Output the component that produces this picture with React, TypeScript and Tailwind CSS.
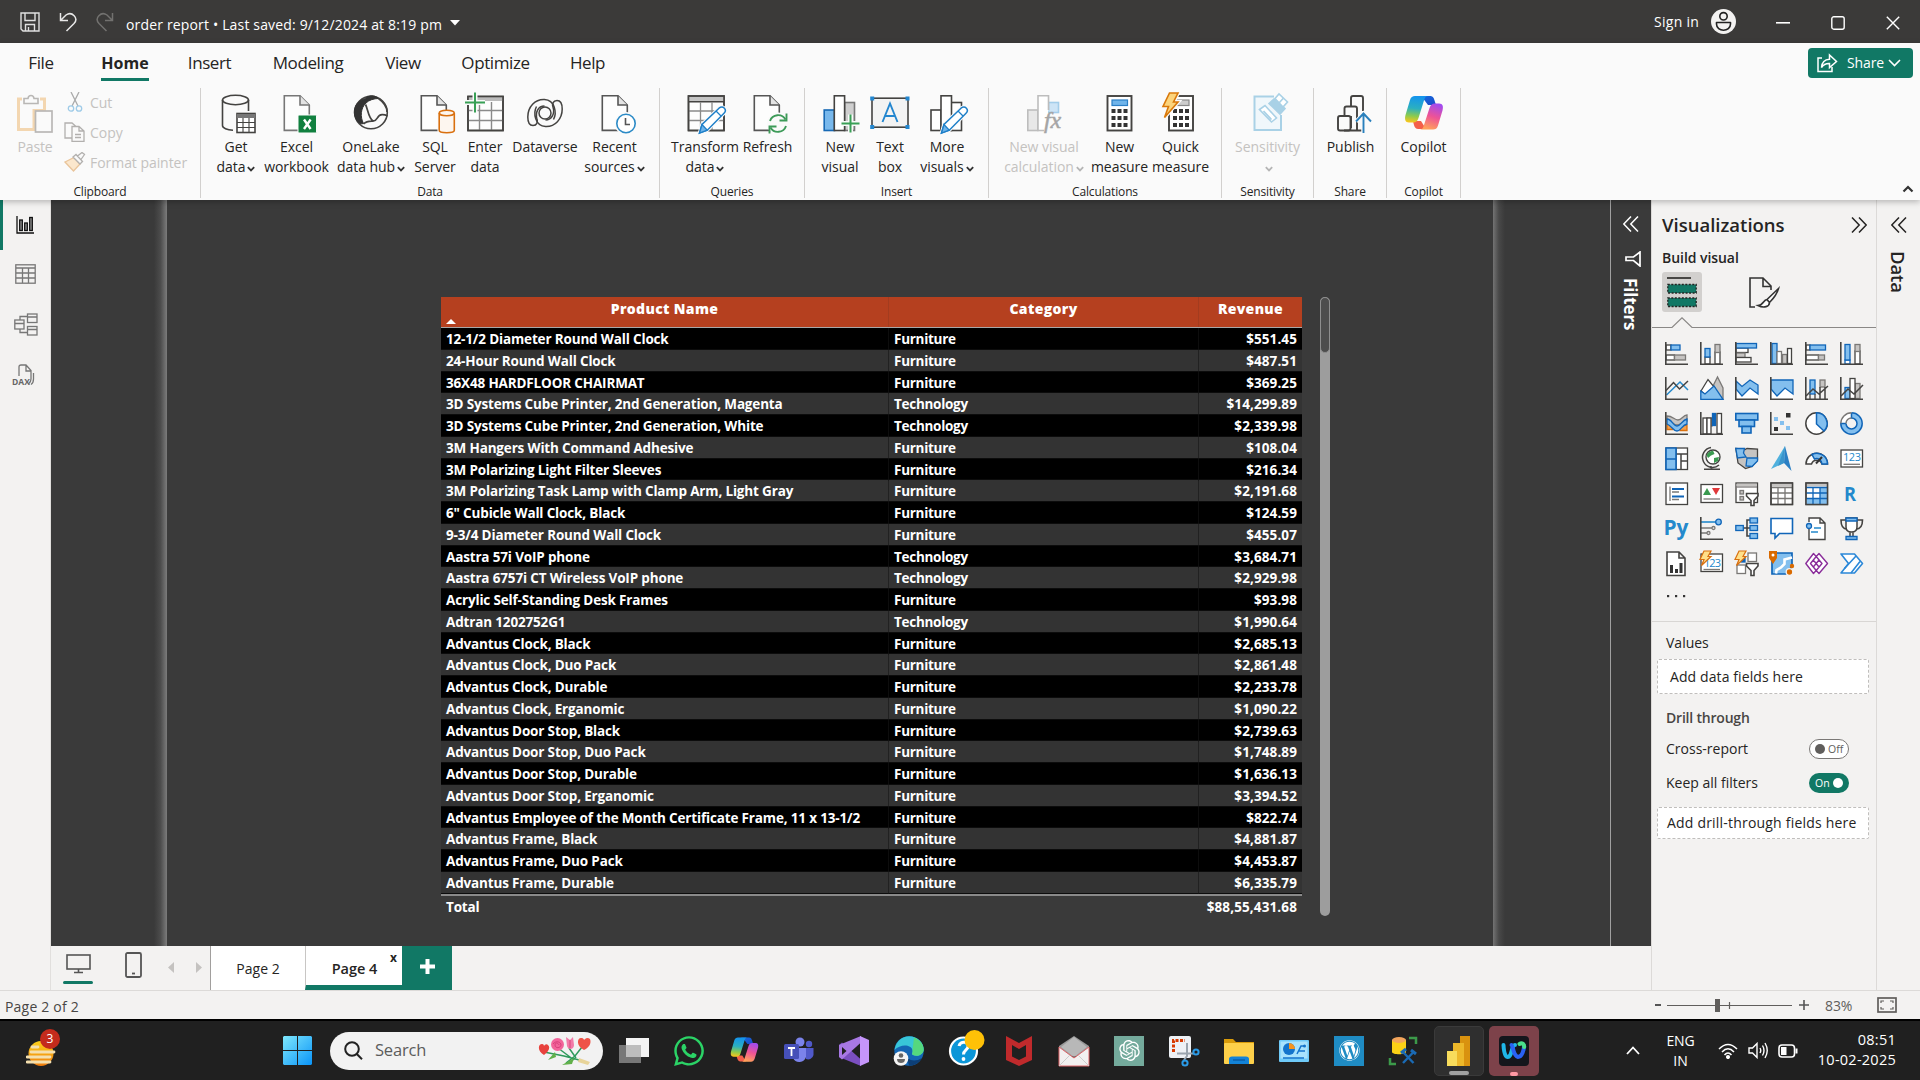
import React from "react";
import { FaWordpress, FaWhatsapp } from "react-icons/fa";
import { RiOpenaiFill } from "react-icons/ri";

type Kids = { children?: React.ReactNode };

const INK = "#444341";
const BLUE = "#1065b8";
const LBLUE = "#83bfee";
const GREY = "#7a7876";
const LGREY = "#c6c4c2";

/* ---------- shared glyph pieces ---------- */

const Chev = ({ c = "#333" }: { c?: string }) => (
  <svg width="8" height="6" viewBox="0 0 8 6" className="ml-[2px] mt-[3px] inline-block shrink-0" fill="none" stroke={c} strokeWidth="1.8">
    <path d="M.8 1.2 4 4.4 7.2 1.2" />
  </svg>
);

const Ico = ({ children }: Kids) => (
  <svg width="40" height="40" viewBox="0 0 40 40" fill="none" stroke={INK} strokeWidth="1.6" className="shrink-0 overflow-visible">
    {children}
  </svg>
);

const Page = ({ x = 6.5, stroke = "#555" }: { x?: number; stroke?: string }) => (
  <g transform={`translate(${x} 0)`} stroke={stroke} fill="#fdfdfd">
    <path d="M.8 1.8H16.5L25.8 11V36.4H.8Z" />
    <path d="M16.5 1.8V11H25.8" fill="#e3e3e3" />
  </g>
);

const Pencil = () => (
  <g>
    <path d="M14.5 39 17 30.5 34 14.2Q37 11.800 39.400 14.200Q41.600 16.600 39 19.300L22.300 36.200Z" fill="#fff" stroke="#fafafa" strokeWidth="3.500" />
    <path d="M14.5 39 17 30.5 34 14.2Q37 11.800 39.400 14.200Q41.600 16.600 39 19.300L22.300 36.200Z" fill="#fff" stroke="#1e7fc8" strokeWidth="1.500" />
    <path d="M17 30.500 14.500 39 22.300 36.200Z" fill="#6fb4ea" stroke="#1e7fc8" strokeWidth="1.300" />
    <path d="M31 17 36 22" stroke="#1e7fc8" strokeWidth="1.200" />
  </g>
);

const Plus = ({ x, y, r = 9 }: { x: number; y: number; r?: number }) => (
  <g>
    <path d={`M${x} ${y - r}V${y + r}M${x - r} ${y}H${x + r}`} stroke="#fafafa" strokeWidth="5" />
    <path d={`M${x} ${y - r}V${y + r}M${x - r} ${y}H${x + r}`} stroke="#39a056" strokeWidth="2" />
  </g>
);

/* ---------- ribbon icons ---------- */

const GetData = () => (
  <Ico>
    <ellipse cx="19.500" cy="6" rx="13" ry="4.700" />
    <path d="M6.500 6V31.500C6.500 34 11 36 17 36.300M32.500 6V17" />
    <rect x="21" y="19.500" width="18" height="19" fill="#fff" />
    <path d="M21 22H39" strokeWidth="4" stroke="#777" />
    <path d="M21 28.500H39M21 33.500H39M27 24V38M33 24V38" strokeWidth="1.100" />
  </Ico>
);
const Excel = () => (
  <Ico>
    <Page stroke="#777" />
    <rect x="21" y="21" width="18.500" height="18" rx="1" fill="#11803f" stroke="#fafafa" strokeWidth="1" />
    <path d="M27 25.500 33.600 35M33.600 25.500 27 35" stroke="#fff" strokeWidth="2.400" />
  </Ico>
);
const OneLake = () => (
  <Ico>
    <circle cx="20" cy="18.500" r="16.300" />
    <path d="M14.500 4.500C17 1 24 .800 27.500 4.500C23 4.500 18 6 15 9C9.500 14 9 23 12.500 29.500C8 31.500 2.800 24 3.300 17C4 10 8 6.500 14.500 4.500Z" fill="#333" stroke="#333" strokeWidth="1" />
    <path d="M12.500 30C15 27.500 19 27 22 27.200C27 27 25.500 21 31 20.700C34 20.500 35.500 21.500 36.500 22M14.500 10.500C17 15 17 23 22 27M27.500 4.500C31 7 36 12 36 18" strokeWidth="1.700" />
  </Ico>
);
const Sql = () => (
  <Ico>
    <Page x={5.5} />
    <g stroke="#fafafa" strokeWidth="4"><path d="M24.500 19V37H39V19Z" fill="#fafafa" /></g>
    <g stroke="#d9700f" fill="#fdf6ef">
      <path d="M24.200 19V36.200C24.200 39.500 39.300 39.500 39.300 36.200V19" />
      <ellipse cx="31.750" cy="19" rx="7.500" ry="2.700" />
    </g>
  </Ico>
);
const EnterData = () => (
  <Ico>
    <rect x="3" y="2.500" width="35" height="34" fill="#fdfdfd" />
    <path d="M3 5H38" stroke="#bbb" strokeWidth="4" />
    <path d="M3 16.500H38M3 26.500H38M14.500 8V36M26.500 8V36" stroke="#8a8a8a" strokeWidth="1.400" />
    <rect x="3" y="2.500" width="35" height="34" />
    <Plus x={10} y={8.500} r={10} />
  </Ico>
);
const Dataverse = () => (
  <Ico>
    <g strokeWidth="1.500">
      <path d="M28.500 25.500C32 19 30 6 19.500 5.500C10 5 2.800 13 2.800 23C2.800 28 4.500 31.500 8 31.500C12 31.500 13 28 12 25C10 18.500 13 12 19.500 12" />
      <path d="M11.500 12.500C8 19 10 32 20.500 32.500C30 33 37.200 25 37.200 15C37.200 10 35.500 6.500 32 6.500C28 6.500 27 10 28 13C30 19.500 27 26 20.500 26" />
      <circle cx="20" cy="19" r="6" />
    </g>
  </Ico>
);
const Recent = () => (
  <Ico>
    <Page />
    <circle cx="31" cy="29.500" r="9.200" fill="#fff" stroke="#fafafa" strokeWidth="4.500" />
    <circle cx="31" cy="29.500" r="9.200" fill="#fff" stroke="#2b8ac6" />
    <path d="M30.500 24V30.500H35" stroke="#555" />
  </Ico>
);
const Transform = () => (
  <Ico>
    <rect x="3.500" y="2" width="35.500" height="34.500" fill="#fdfdfd" />
    <path d="M4 5H39" stroke="#c4c4c4" strokeWidth="4" />
    <path d="M4 7.700H39" />
    <path d="M4 17H39M4 26.500H39M15.500 8V36M27 8V36" stroke="#8a8a8a" strokeWidth="1.300" />
    <rect x="3.500" y="2" width="35.500" height="34.500" />
    <Pencil />
  </Ico>
);
const Refresh = () => (
  <Ico>
    <Page x={5.5} />
    <circle cx="30" cy="29.500" r="11" fill="#fafafa" stroke="none" />
    <g stroke="#3d9a58" strokeWidth="1.900">
      <path d="M22 27A8.500 8.500 0 0 1 37.500 25.500M38 32A8.500 8.500 0 0 1 22.500 33.500" />
      <path d="M38.500 19.500V26.500H31.500M21.500 39.500V32.500H28.500" />
    </g>
  </Ico>
);
const NewVisual = () => (
  <Ico>
    <rect x="24.500" y="8.500" width="10" height="28" fill="#cfcfcf" stroke="#777" />
    <rect x="4.200" y="16" width="10.300" height="20.500" fill="#78b8ec" stroke="#1769b5" />
    <rect x="14.300" y="1.800" width="10.300" height="34.700" fill="#fff" />
    <Plus x={30.500} y={29.500} />
  </Ico>
);
const TextBox = () => (
  <Ico>
    <rect x="2" y="4.200" width="36" height="29" fill="#f3f3f3" />
    <path d="M12.500 28 20 9.500 27.500 28M15 22H25" stroke="#2386cf" strokeWidth="1.900" />
    <path d="M.2 2.500h4v4h-4zM35.500 2.500h4v4h-4zM.2 31h4v4h-4zM35.500 31h4v4h-4z" fill="#2386cf" stroke="none" />
  </Ico>
);
const MoreVisuals = () => (
  <Ico>
    <g fill="#fff">
      <rect x="4" y="16" width="10" height="20.500" />
      <rect x="24" y="8.500" width="10.500" height="28" />
      <rect x="14" y="1.800" width="10.500" height="34.700" />
    </g>
    <Pencil />
  </Ico>
);
const VisualCalc = () => (
  <Ico>
    <g stroke="#bdbdbd">
      <rect x="3.800" y="16" width="10" height="20.500" fill="#e8e8e8" />
      <rect x="24.500" y="8.500" width="10" height="10" fill="#cde4f6" stroke="#a3cdea" />
      <path d="M20 36.500H14V1.800H24.500V16" fill="#fff" />
    </g>
    <text x="20" y="33.500" fontFamily="Liberation Serif, serif" fontStyle="italic" fontSize="24" fill="#a5a5a5" stroke="#a5a5a5" strokeWidth=".5">fx</text>
  </Ico>
);
const Calc = ({ x = 7.500, grey = false }: { x?: number; grey?: boolean }) => (
  <g transform={`translate(${x} 0)`}>
    <rect x="0" y="2" width="24" height="34.500" fill="#fff" strokeWidth="1.900" />
    <rect x="4.500" y="6" width="15.500" height="5.500" fill={grey ? "#ccc" : "#6fb4ea"} stroke={grey ? "#888" : "#2b7fc5"} strokeWidth="1.200" />
    {[15, 22, 29].map((y) =>
      [4, 10, 16].map((cx) => <rect key={`${cx}-${y}`} x={cx} y={y} width="4" height="4" fill="#333" stroke="none" />)
    )}
  </g>
);
const NewMeasure = () => <Ico><Calc /></Ico>;
const QuickMeasure = () => (
  <Ico>
    <Calc x={8} grey />
    <path d="M8.500-1H17L12.500 8H17L3.500 23.500 7.500 12.500H2Z" fill="#fcd47c" stroke="#fafafa" strokeWidth="4" />
    <path d="M8.500-1H17L12.500 8H17L3.500 23.500 7.500 12.500H2Z" fill="#fcd47c" stroke="#d9780a" strokeWidth="1.600" />
  </Ico>
);
const Sensitivity = () => (
  <Ico>
    <g stroke="#a9d1e6">
      <path d="M26 2.500H6.500V36H33V21" fill="#f0f7fb" strokeWidth="2" />
      <path d="M11.500 15.500 17 11.500 28.500 24 23.500 28Z M15.500 17 23.500 25.500" fill="#fff" />
      <path d="M21 9.500 26 5 37 14.500 32 20Z" fill="#a9d1e6" />
      <path d="M27 4.500 31 0 39.500 8 35 13Z M31.500 8.500 35.500 4" fill="#fff" />
    </g>
  </Ico>
);
const Publish = () => (
  <Ico>
    <g strokeWidth="1.900">
      <path d="M20 13V4Q20 2 22 2H30Q32 2 32 4V17" />
      <path d="M13.500 22V14.500Q13.500 12.500 15.500 12.500H24Q26 12.500 26 14.500V36" />
      <rect x="7" y="22" width="12.500" height="14.500" rx="2" />
      <path d="M13 36.500H30.500M20 22V34" />
    </g>
    <path d="M32.500 39V20M25 27.500 32.500 19.500 40 27.500" stroke="#fafafa" strokeWidth="4" />
    <path d="M32.500 39V20M25 27.500 32.500 19.500 40 27.500" stroke="#2a80bd" strokeWidth="1.900" />
  </Ico>
);

const CopilotMark = ({ size, id }: { size: number; id: string }) => (
  <svg width={size} height={size} viewBox="0 1 40 40" className="shrink-0">
    <defs>
      <linearGradient id={`${id}a`} x1=".3" y1="0" x2=".2" y2="1">
        <stop offset="0" stopColor="#1494ec" /><stop offset=".45" stopColor="#2bb0c0" /><stop offset=".75" stopColor="#8ecb4c" /><stop offset="1" stopColor="#ffc61a" />
      </linearGradient>
      <linearGradient id={`${id}b`} x1=".7" y1="0" x2=".4" y2="1">
        <stop offset="0" stopColor="#a04af0" /><stop offset=".5" stopColor="#ee5396" /><stop offset="1" stopColor="#ffa35a" />
      </linearGradient>
      <linearGradient id={`${id}c`} x1="0" y1="0" x2="1" y2="1">
        <stop offset="0" stopColor="#1470e0" /><stop offset="1" stopColor="#1b48c8" />
      </linearGradient>
    </defs>
    <path d="M14 3H26C29 3 30 5 31 9L32 12H24L18 4Z" fill={`url(#${id}c)`} />
    <path d="M9 28H17L22 36H14C11 36 10 33 9 28Z" fill="#f4604a" />
    <path d="M11 3H24C21 3 20.500 6 19.500 9L14.500 25C13.500 28 12 29.500 9 29.500H5C1 29.500.500 26 1.500 22L6 7C7 4 8.500 3 11 3Z" fill={`url(#${id}a)`} />
    <path d="M29 36.500H16C19 36.500 19.500 33.500 20.500 30.500L25.500 15C26.500 12 28 10.500 31 10.500H35C39 10.500 39.500 13.500 38.500 17.500L34 32.500C33 35.500 31.500 36.500 29 36.500Z" fill={`url(#${id}b)`} />
  </svg>
);

/* ---------- ribbon structure ---------- */

type BtnProps = { w: string; icon: React.ReactNode; a: string; b?: string; chev?: boolean; off?: boolean };
const Btn = ({ w, icon, a, b, chev, off }: BtnProps) => (
  <div className={`flex shrink-0 flex-col items-center whitespace-nowrap text-[14px] leading-[20px] tracking-[-0.05px] ${w} ${off ? "text-[#c4c2c0]" : "text-[#252423]"}`}>
    {icon}
    <div className="mt-[3px]">{a}</div>
    <div className="flex h-5 items-center">
      {b}
      {chev && <Chev c={off ? "#b5b5b5" : "#333"} />}
    </div>
  </div>
);

const Group = ({ w, label, pad = "", children }: Kids & { w: string; label: string; pad?: string }) => (
  <div className={`flex h-[110px] shrink-0 flex-col border-r border-[#d2d0ce] ${w}`}>
    <div className={`flex h-[94px] shrink-0 pt-[6px] ${pad}`}>{children}</div>
    <div className="shrink-0 text-center text-[12px] leading-[20px] tracking-[-0.15px] text-[#252423]">{label}</div>
  </div>
);

const Tab = ({ w, label, on }: { w: string; label: string; on?: boolean }) => (
  <div className={`flex h-[38px] shrink-0 flex-col items-center justify-end text-[17px] text-[#252423] ${w}`}>
    <span className={`leading-[26px] ${on ? "border-b-[3px] border-[#117865] pb-[2px] text-[16px] font-bold" : "pb-[5px] tracking-[-0.4px]"}`}>{label}</span>
  </div>
);

const Ribbon = () => (
  <div className="relative z-10 flex h-[157px] shrink-0 flex-col bg-[#fafafa] shadow-[0_2px_6px_rgba(0,0,0,0.25)]">
    <div className="flex h-[45px] shrink-0">
      <Tab w="w-[82px]" label="File" />
      <Tab w="w-[86px]" label="Home" on />
      <Tab w="w-[83px]" label="Insert" />
      <Tab w="w-[114px]" label="Modeling" />
      <Tab w="w-[76px]" label="View" />
      <Tab w="w-[109px]" label="Optimize" />
      <Tab w="w-[75px]" label="Help" />
      <div className="ml-auto mr-[7px] mt-[5px] flex h-[30px] w-[105px] items-center rounded-[4px] bg-[#117865] pl-[9px] text-[14px] text-white">
        <svg width="21" height="20" viewBox="0 0 21 20" fill="none" stroke="#fff" strokeWidth="1.500">
          <path d="M5 5H1V18.500H15V14" />
          <path d="M4.500 14.500C5 9 8 6.500 12.500 6.300V2L19.500 8.500 12.500 14.500V10.500C9 10.300 6.500 11.500 4.500 14.500Z" />
        </svg>
        <span className="-mt-[2px] ml-[9px] tracking-[-0.1px]">Share</span>
        <svg width="13" height="8" viewBox="0 0 13 8" fill="none" stroke="#fff" strokeWidth="1.600" className="ml-[4px]"><path d="M1 1 6.500 6.500 12 1" /></svg>
      </div>
    </div>
    <div className="flex">
      <Group w="w-[201px]" label="Clipboard">
        <div className="flex w-[64px] flex-col items-center pl-[6px] text-[14px] leading-[20px] tracking-[-0.1px] text-[#c4c2c0]">
          <Ico>
            <path d="M9 5H5.500V35.500H21V16.500H31.500V5H27" transform="translate(-2 0)" stroke="#f3d6b0" strokeWidth="3" />
            <path d="M11 9.500V4.500H15C15.500.500 20.500.500 21 4.500H25V9.500Z" stroke="#b9b7b5" fill="#fafafa" transform="translate(-2 0)" />
            <rect x="20.500" y="17" width="16.500" height="21" stroke="#b9b7b5" strokeWidth="1.700" fill="#fafafa" />
          </Ico>
          <div className="mt-[3px]">Paste</div>
        </div>
        <div className="-mt-[7px] flex flex-col text-[14px] tracking-[-0.05px] text-[#c4c2c0]">
          <div className="flex h-[30px] items-center">
            <svg width="22" height="20" viewBox="0 0 22 20" fill="none" strokeWidth="1.300"><path d="M7 0 14 14M15 0 8 14" stroke="#aaa" /><circle cx="7" cy="16.500" r="2.700" stroke="#9fcbe8" /><circle cx="15" cy="16.500" r="2.700" stroke="#9fcbe8" /></svg>
            <span className="ml-[4px]">Cut</span>
          </div>
          <div className="flex h-[30px] items-center">
            <svg width="22" height="20" viewBox="0 0 22 20" fill="none" stroke="#b2b0ae" strokeWidth="1.300"><path d="M8 16H1V1H8L12 4.500M8 4.500H15L20 9V19.500H8ZM15 4.500V9H20M11 12.500H17M11 15.500H17" /></svg>
            <span className="ml-[4px]">Copy</span>
          </div>
          <div className="flex h-[30px] items-center">
            <svg width="22" height="20" viewBox="0 0 22 20" fill="none" strokeWidth="1.300"><path d="M1 10 10 5.500 16 12 9.500 19Z" fill="#fbe7cd" stroke="#e9c49a" /><path d="M9 5 12 2.500 18.500 9.500 16 12ZM13.500 4 18 .500 20.500 2.500 17 7.500" stroke="#b2b0ae" fill="#fafafa" /></svg>
            <span className="ml-[4px]">Format painter</span>
          </div>
        </div>
      </Group>
      <Group w="w-[459px]" label="Data" pad="pl-[5px]">
        <Btn w="w-[60px]" icon={<GetData />} a="Get" b="data" chev />
        <Btn w="w-[61px]" icon={<Excel />} a="Excel" b="workbook" />
        <Btn w="w-[88px]" icon={<OneLake />} a="OneLake" b="data hub" chev />
        <Btn w="w-[40px]" icon={<Sql />} a="SQL" b="Server" />
        <Btn w="w-[60px]" icon={<EnterData />} a="Enter" b="data" />
        <Btn w="w-[60px]" icon={<Dataverse />} a="Dataverse" />
        <Btn w="w-[79px]" icon={<Recent />} a="Recent" b="sources" chev />
      </Group>
      <Group w="w-[145px]" label="Queries" pad="pl-[11px]">
        <Btn w="w-[68px]" icon={<Transform />} a="Transform" b="data" chev />
        <Btn w="w-[57px]" icon={<Refresh />} a="Refresh" />
      </Group>
      <Group w="w-[184px]" label="Insert" pad="pl-[10px]">
        <Btn w="w-[50px]" icon={<NewVisual />} a="New" b="visual" />
        <Btn w="w-[50px]" icon={<TextBox />} a="Text" b="box" />
        <Btn w="w-[64px]" icon={<MoreVisuals />} a="More" b="visuals" chev />
      </Group>
      <Group w="w-[233px]" label="Calculations" pad="pl-[10px]">
        <Btn w="w-[90px]" icon={<VisualCalc />} a="New visual" b="calculation" chev off />
        <Btn w="w-[61px]" icon={<NewMeasure />} a="New" b="measure" />
        <Btn w="w-[61px]" icon={<QuickMeasure />} a="Quick" b="measure" />
      </Group>
      <Group w="w-[92px]" label="Sensitivity">
        <Btn w="w-[91px]" icon={<Sensitivity />} a="Sensitivity" chev off />
      </Group>
      <Group w="w-[73px]" label="Share">
        <Btn w="w-[73px]" icon={<Publish />} a="Publish" />
      </Group>
      <Group w="w-[74px]" label="Copilot">
        <Btn w="w-[73px]" icon={<CopilotMark size={40} id="rb" />} a="Copilot" />
      </Group>
      <svg width="12" height="8" viewBox="0 0 12 8" fill="none" stroke="#333" strokeWidth="2.200" className="ml-auto mr-[6px] mt-[97px]"><path d="M1.500 6.500 6 2 10.500 6.500" /></svg>
    </div>
  </div>
);

const TitleBar = () => (
  <div className="flex h-[43px] shrink-0 items-center bg-[#3b3a39] text-white">
    <svg width="20" height="20" viewBox="0 0 20 20" fill="none" stroke="#e0e0e0" strokeWidth="1.400" className="ml-[20px]">
      <path d="M1 1H19V19H3L1 17ZM5 1V8.500H15V1M5.500 19V12.500H14.500V19M8.500 15V19" />
    </svg>
    <svg width="18" height="20" viewBox="0 0 18 20" fill="none" stroke="#e8e8e8" strokeWidth="1.500" className="ml-[19px]">
      <path d="M1.500 1V8.500H9M1.500 8.500 7 3C13-1 20 6 15 11.500L7.500 19" />
    </svg>
    <svg width="18" height="20" viewBox="0 0 18 20" fill="none" stroke="#72716f" strokeWidth="1.500" className="ml-[19px]">
      <path d="M16.500 1V8.500H9M16.500 8.500 11 3C5-1-2 6 3 11.500L10.500 19" />
    </svg>
    <span className="ml-[12px] mt-[5px] w-[317px] whitespace-nowrap text-[14px] tracking-[0.16px]">order report • Last saved: 9/12/2024 at 8:19 pm</span>
    <svg width="10" height="6" viewBox="0 0 10 6" className="ml-[7px] mt-[2px]"><path d="M0 0H10L5 5.500Z" fill="#fff" /></svg>
    <span className="ml-auto text-[14px] tracking-[0.25px]">Sign in</span>
    <svg width="25" height="25" viewBox="0 0 25 25" className="ml-[12px]">
      <circle cx="12.500" cy="12.500" r="12.500" fill="#f3f2f1" />
      <g fill="none" stroke="#222" strokeWidth="1.600"><circle cx="12.500" cy="7.300" r="3.700" /><path d="M5.500 13.500H19.500V15C19.500 19 16 21.300 12.500 21.300C9 21.300 5.500 19 5.500 15Z" strokeLinejoin="round" /></g>
    </svg>
    <svg width="14" height="2" className="ml-[40px] mt-[2px]"><rect width="14" height="1.600" fill="#fff" /></svg>
    <svg width="14" height="14" viewBox="0 0 14 14" className="ml-[41px] mt-[3px]" fill="none" stroke="#fff" strokeWidth="1.400"><rect x=".8" y=".8" width="12.400" height="12.400" rx="2" /></svg>
    <svg width="14" height="14" viewBox="0 0 14 14" className="ml-[41px] mr-[20px] mt-[3px]" fill="none" stroke="#fff" strokeWidth="1.400"><path d="M.8.8 13.200 13.200M13.200.8.8 13.200" /></svg>
  </div>
);

/* ---------- left rail ---------- */

const Rail = () => (
  <div className="flex w-[51px] shrink-0 flex-col border-r border-[#e1dfdd] bg-[#f3f2f1]">
    <div className="flex h-[50px] items-center border-l-[3px] border-[#117865] pl-[13px]">
      <svg width="18" height="18" viewBox="0 0 18 18" fill="#999" stroke="#111" strokeWidth="1.300"><path d="M1 0V17H18" fill="none" /><rect x="3.700" y="4" width="2.600" height="10.500" /><rect x="8.700" y="7" width="2.600" height="7.500" /><rect x="13.700" y="1.500" width="2.600" height="13" /></svg>
    </div>
    <div className="flex h-[50px] items-center pb-[2px] pl-[15px]">
      <svg width="21" height="20" viewBox="0 0 21 20" fill="none" stroke="#777" strokeWidth="1.300"><rect x=".8" y=".8" width="19.400" height="18.400" /><path d="M1 4H20M1 9H20M1 14H20M7.500 4V19M13.500 4V19" /></svg>
    </div>
    <div className="flex h-[50px] items-center pb-[2px] pl-[14px]">
      <svg width="24" height="23" viewBox="0 0 24 23" fill="none" stroke="#777" strokeWidth="1.300"><rect x="13.500" y="1" width="9.500" height="8.500" /><path d="M13.500 4H23M13.500 16.500H23M1 10.500H10M6 7V3.500H13.500M6 16V19.500H13.500" /><rect x="13.500" y="13.500" width="9.500" height="8.500" /><rect x=".8" y="7" width="9.200" height="9" /></svg>
    </div>
    <div className="flex h-[50px] items-center pl-[12px]">
      <svg width="24" height="22" viewBox="0 0 24 22" fill="none" stroke="#777" strokeWidth="1.300" className="overflow-visible"><path d="M7 12V3Q7 1 9 1H14L19 6.500V15Q19 18 16.500 20M14 1V7H19M21.500 9V15Q21.500 19 19 20.500" /><text x="0" y="20.500" fontSize="8.500" fontWeight="700" fill="#666" stroke="none" fontFamily="Open Sans, sans-serif">DAX</text></svg>
    </div>
  </div>
);

/* ---------- report table ---------- */

const ROWS: [string, string, string][] = [
  ["12-1/2 Diameter Round Wall Clock", "Furniture", "$551.45"],
  ["24-Hour Round Wall Clock", "Furniture", "$487.51"],
  ["36X48 HARDFLOOR CHAIRMAT", "Furniture", "$369.25"],
  ["3D Systems Cube Printer, 2nd Generation, Magenta", "Technology", "$14,299.89"],
  ["3D Systems Cube Printer, 2nd Generation, White", "Technology", "$2,339.98"],
  ["3M Hangers With Command Adhesive", "Furniture", "$108.04"],
  ["3M Polarizing Light Filter Sleeves", "Furniture", "$216.34"],
  ["3M Polarizing Task Lamp with Clamp Arm, Light Gray", "Furniture", "$2,191.68"],
  ['6" Cubicle Wall Clock, Black', "Furniture", "$124.59"],
  ["9-3/4 Diameter Round Wall Clock", "Furniture", "$455.07"],
  ["Aastra 57i VoIP phone", "Technology", "$3,684.71"],
  ["Aastra 6757i CT Wireless VoIP phone", "Technology", "$2,929.98"],
  ["Acrylic Self-Standing Desk Frames", "Furniture", "$93.98"],
  ["Adtran 1202752G1", "Technology", "$1,990.64"],
  ["Advantus Clock, Black", "Furniture", "$2,685.13"],
  ["Advantus Clock, Duo Pack", "Furniture", "$2,861.48"],
  ["Advantus Clock, Durable", "Furniture", "$2,233.78"],
  ["Advantus Clock, Erganomic", "Furniture", "$1,090.22"],
  ["Advantus Door Stop, Black", "Furniture", "$2,739.63"],
  ["Advantus Door Stop, Duo Pack", "Furniture", "$1,748.89"],
  ["Advantus Door Stop, Durable", "Furniture", "$1,636.13"],
  ["Advantus Door Stop, Erganomic", "Furniture", "$3,394.52"],
  ["Advantus Employee of the Month Certificate Frame, 11 x 13-1/2", "Furniture", "$822.74"],
  ["Advantus Frame, Black", "Furniture", "$4,881.87"],
  ["Advantus Frame, Duo Pack", "Furniture", "$4,453.87"],
  ["Advantus Frame, Durable", "Furniture", "$6,335.79"],
];

const Canvas = () => (
  <div className="flex min-w-0 flex-1 bg-[#3a3a3a]">
    <div className="flex w-[116px] shrink-0 justify-end"><div className="w-[13px] bg-linear-to-r from-[#3a3a3a] via-[#4c4c4c] to-[#7c7c7c]" /></div>
    <div className="flex w-[1326px] shrink-0 pl-[274px] pt-[97px]">
      <div className="w-[861px] text-[13.5px] font-bold tracking-[-0.16px] text-white">
        <div className="grid h-[31px] grid-cols-[448px_310px_103px] border-b border-[#a8a8a8] bg-[#b5401f] text-center text-[14px] font-extrabold leading-[24px] tracking-[0.35px]">
          <div className="relative border-r border-[#a33c1f]">
            Product Name
            <svg width="10" height="5" viewBox="0 0 10 5" className="absolute bottom-[3px] left-[5px]"><path d="M0 5 5 0 10 5Z" fill="#fff" /></svg>
          </div>
          <div className="border-r border-[#a33c1f]">Category</div>
          <div>Revenue</div>
        </div>
        {ROWS.map(([n, c, r], i) => (
          <div key={n} className={`grid h-[21.750px] grid-cols-[448px_310px_103px] border-b border-[#0c0c0c] leading-[22px] ${i % 2 ? "bg-[#333333]" : "bg-black"}`}>
            <div className="whitespace-nowrap border-r border-[#161616]/60 pl-[5px]">{n}</div>
            <div className="border-r border-[#161616]/60 pl-[5px] tracking-[-0.28px]">{c}</div>
            <div className="pr-[5px] text-right tracking-[0.1px]">{r}</div>
          </div>
        ))}
        <div className="flex h-[26px] items-center justify-between border-t-2 border-[#8a8a8a] px-[5px]"><span>Total</span><span className="tracking-[0.12px]">$88,55,431.68</span></div>
      </div>
      <div className="ml-[18px] h-[619px] w-[10px] rounded-full bg-[#9d9d9d]"><div className="h-[56px] rounded-full border border-[#8e8e8e] bg-[#4d4d4d]" /></div>
    </div>
    <div className="w-[117px] shrink-0"><div className="h-full w-[12px] bg-linear-to-l from-[#3a3a3a] via-[#484848] to-[#737373]" /></div>
  </div>
);

const PageTabs = () => (
  <div className="flex h-[44px] shrink-0 bg-[#f3f2f1]">
    <div className="ml-[12px] flex w-[30px] flex-col items-center">
      <svg width="25" height="20" viewBox="0 0 25 20" fill="none" stroke="#555" strokeWidth="1.600" className="mt-[8px]"><rect x="1" y="1" width="23" height="14" /><path d="M12.500 15V18.500M8 18.500H17" /></svg>
      <div className="mt-[7px] h-[3px] w-full rounded-full bg-[#117865]" />
    </div>
    <svg width="17" height="26" viewBox="0 0 17 26" fill="none" stroke="#555" strokeWidth="1.800" className="ml-[32px] mt-[6px]"><rect x="1" y="1" width="15" height="24" rx="1.500" /><path d="M7 21.500H10" /></svg>
    <svg width="6" height="11" viewBox="0 0 6 11" className="ml-[26px] mt-[16px]"><path d="M6 0V11L0 5.500Z" fill="#c4c2c0" /></svg>
    <svg width="6" height="11" viewBox="0 0 6 11" className="ml-[22px] mt-[16px]"><path d="M0 0V11L6 5.500Z" fill="#c4c2c0" /></svg>
    <div className="ml-[8px] flex w-[95px] items-center justify-center border-l border-[#a19f9d] bg-white pt-[1px] text-[14px] tracking-[0.05px] text-[#252423]">Page 2</div>
    <div className="relative flex w-[97px] items-center justify-center border-b-[5px] border-l border-[#117865] border-l-[#c8c6c4] bg-white pl-[1px] pt-[6px] text-[14.5px] font-semibold tracking-[-0.05px] text-[#252423]">
      Page 4<span className="absolute right-[5px] top-[4px] text-[12px] font-bold leading-[16px]">x</span>
    </div>
    <div className="flex w-[50px] items-center justify-center bg-[#117865]"><svg width="15" height="15" viewBox="0 0 15 15" className="-mt-[3px]" stroke="#fff" strokeWidth="4"><path d="M7.500 0V15M0 7.500H15" /></svg></div>
  </div>
);

/* ---------- right panes ---------- */

const Dbl = ({ c, flip }: { c: string; flip?: boolean }) => (
  <svg width="16" height="16" viewBox="0 0 16 16" fill="none" stroke={c} strokeWidth="1.500" className={flip ? "-scale-x-100" : ""}><path d="M8 .500.800 8 8 15.500M15 .500 7.800 8 15 15.500" /></svg>
);

const Axis = () => <path d="M.8 0V22.200H23" stroke={INK} fill="none" strokeWidth="1.600" />;
const V = ({ children }: Kids) => (
  <svg width="24" height="24" viewBox="0 0 24 24" fill="none" strokeWidth="1.300" className="overflow-visible">{children}</svg>
);
const Box = ({ x, y, w, h, f, s }: { x: number; y: number; w: number; h: number; f: string; s: string }) => <rect x={x} y={y} width={w} height={h} fill={f} stroke={s} />;
const BoltS = () => <path d="M4-1H11L8 4.500H11L1.500 13.500 4 7.500H0Z" fill="#ffe08a" stroke="#d9700f" strokeWidth="1.200" />;
const Funnel = () => <path d="M11.500 11.500H23V14L19 18.500V23.500H16V18.500L11.500 14Z" fill="#fff" stroke={INK} strokeWidth="1.600" />;

const VIS: React.ReactNode[] = [
  <V><Box x={1} y={3} w={5} h={5} f="#fff" s={INK} /><Box x={6} y={3} w={9} h={5} f={LBLUE} s={BLUE} /><Box x={1} y={13} w={8.500} h={5} f="#fff" s={INK} /><Box x={9.500} y={13} w={11} h={5} f={LGREY} s={GREY} /><Axis /></V>,
  <V><Box x={5} y={15} w={5} h={7} f="#fff" s={INK} /><Box x={5} y={6.500} w={5} h={8.500} f={LBLUE} s={BLUE} /><Box x={15} y={10} w={5} h={12} f="#fff" s={INK} /><Box x={15} y={2.500} w={5} h={8} f={LGREY} s={GREY} /><Axis /></V>,
  <V><Box x={1} y={6} w={12} h={4.500} f="#fff" s={INK} /><Box x={1} y={11} w={9} h={4.500} f={LGREY} s={GREY} /><Box x={1} y={15.500} w={15} h={4.500} f="#fff" s={INK} /><Box x={1} y={1.500} w={20.500} h={4.500} f={LBLUE} s={BLUE} /><Axis /></V>,
  <V><Box x={2} y={1.500} w={5} h={20} f={LBLUE} s={BLUE} /><Box x={7} y={9.500} w={4.500} h={12} f="#fff" s={GREY} /><Box x={12.500} y={12.500} w={4.500} h={9} f={LGREY} s={GREY} /><Box x={17.500} y={6.500} w={4} h={15} f="#fff" s={INK} /><Axis /></V>,
  <V><Box x={1} y={3} w={4} h={5} f="#fff" s={INK} /><Box x={5} y={3} w={15.500} h={5} f={LBLUE} s={BLUE} /><Box x={1} y={13} w={12.500} h={5} f="#fff" s={INK} /><Box x={13.500} y={13} w={6} h={5} f={LGREY} s={GREY} /><Axis /></V>,
  <V><Box x={5} y={18} w={5} h={4} f="#fff" s={BLUE} /><Box x={5} y={2.500} w={5} h={15.500} f={LBLUE} s={BLUE} /><Box x={15} y={9} w={5} h={13} f="#fff" s={INK} /><Box x={15} y={2.500} w={5} h={7} f={LGREY} s={GREY} /><Axis /></V>,

  <V><path d="M1.500 18 15 5 23 13" stroke="#2489cc" strokeWidth="1.500" /><path d="M1 13.500 8.500 5.500 14.500 12 23 4" stroke={INK} strokeWidth="1.500" /><Axis /></V>,
  <V><path d="M12 11 17.500 0 23 11V22H16Z" fill={LGREY} stroke={GREY} /><path d="M1 14 8 2.500 15 11 8 20Z" fill="#fff" stroke={INK} /><path d="M.8 14 5 17 14 9 23 22.300H.8Z" fill={LBLUE} stroke={BLUE} /></V>,
  <V><path d="M1 13 7 19 15 11 23 18V22H1Z" fill="#fff" stroke="none" /><path d="M1 4 7 9.500 15 3 23 8V17L15 11 7 19 1 12Z" fill={LBLUE} stroke={BLUE} /><Axis /></V>,
  <V><path d="M1 12V22H23V18L15 11 7 19Z" fill="#fff" /><path d="M1 3H23V17L15 11 7 19 1 12Z" fill={LBLUE} stroke={BLUE} /><Axis /></V>,
  <V><Box x={5} y={3} w={5} h={14} f={LBLUE} s={BLUE} /><path d="M5 17V22M10 17V22" stroke={INK} /><Box x={15} y={3} w={5} h={7} f={LGREY} s={GREY} /><path d="M15 10V22M20 10V22M1 19 8 12 14 17 23 9" stroke={INK} strokeWidth="1.500" /><Axis /></V>,
  <V><Box x={5} y={10.500} w={5} h={11} f={LBLUE} s={BLUE} /><Box x={15} y={6.500} w={5} h={15} f={LGREY} s={GREY} /><Box x={10} y={1.500} w={5} h={20} f="#fff" s={INK} /><path d="M1 19 8 12 14 17 23 8" stroke={INK} strokeWidth="1.500" /><Axis /></V>,

  <V><path d="M2 4C8 4 9 8 13 8S18 3 22 3V9C17 9 16 13 12 13S7 9 2 9Z" fill={LGREY} stroke={GREY} /><path d="M2 11.500H8V17.500H2ZM15 13H22V18.500H15Z" fill="#f7a04a" stroke="#d9700f" /><path d="M2 7C7 7 8 14 12 14S17 8 22 7V12C17 13 16 19 12 19S7 14 2 12Z" fill={LBLUE} stroke={BLUE} /><Axis /></V>,
  <V><Box x={3} y={6} w={4} h={16} f="#fff" s={INK} /><Box x={8} y={6} w={4} h={8} f={LGREY} s={GREY} /><Box x={12.500} y={1.500} w={3} h={12} f={BLUE} s={BLUE} /><Box x={7} y={6} w={4} h={16} f="#fff" s={INK} /><Box x={17} y={1.500} w={4.500} h={20} f="#fff" s={INK} /><Axis /></V>,
  <V><g fill={LBLUE} stroke={BLUE} strokeWidth="1.600"><rect x=".8" y="1.500" width="22" height="6.500" /><rect x="4" y="8" width="15.500" height="6.500" /><rect x="7" y="14.500" width="9" height="6.500" /></g></V>,
  <V><path d="M4 5h4v4H4zM10 9h4v4h-4zM16 14h4v4h-4z" fill={LBLUE} stroke="none" /><path d="M16 1h4.500v4.500H16zM4 15h4v4H4z" fill="#333" /><Axis /></V>,
  <V><circle cx="11.500" cy="11.500" r="10.700" fill="#fff" stroke={INK} strokeWidth="1.500" /><path d="M11.500.8A10.700 10.700 0 0 1 19 19L11.500 12Z" fill={LBLUE} stroke={BLUE} strokeWidth="1.500" /></V>,
  <V><circle cx="11.500" cy="11.500" r="8" stroke={LBLUE} strokeWidth="5" /><path d="M11.500 3.500A8 8 0 0 0 3.500 11.500" stroke="#fff" strokeWidth="5" /><path d="M11.500.8A10.700 10.700 0 1 1 .8 11.500H6M11.500.8V6A5.500 5.500 0 1 1 6 11.500" stroke={BLUE} strokeWidth="1.500" /><path d="M11.500.8A10.700 10.700 0 0 0 .8 11.500M11.500 6A5.500 5.500 0 0 0 6 11.500" stroke={GREY} strokeWidth="1.400" /></V>,

  <V><Box x={1} y={1} w={21.500} h={21.500} f="#fff" s={INK} /><path d="M11 7H22M11 1V22M16 7V22M16 14H22" stroke={INK} strokeWidth="1.500" /><path d="M1 1H11V22.500H1Z M1 12H11" fill={LBLUE} stroke={BLUE} strokeWidth="1.600" /></V>,
  <V><circle cx="13" cy="10" r="7" fill="#fff" stroke={INK} strokeWidth="1.400" /><path d="M9 5 13 3.500 14.500 7 11 8.500 8 11 6.500 8ZM14 11 19 10 18 14 14 16Z" fill="#3a9a50" /><path d="M11 .5A10 10 0 1 0 19 18M11 19V22M4 22.300H20" stroke={INK} strokeWidth="1.500" /></V>,
  <V><path d="M.8 1.500 10 2.500 12 1.500 22.500 2V13L17 19.500 10.500 21.500 3 16 2 9Z" fill={LGREY} stroke={INK} /><path d="M.8 1.500H9.500L8.500 6 11 10 2.500 11ZM12 11H22.500V14L17 19.500 11 19Z" fill={LBLUE} stroke={BLUE} /></V>,
  <V><path d="M15-1 1 22 14 16Z" fill="#4fb0dd" /><path d="M15-1 14 16 21.500 24Z" fill="#2a7fc4" /><path d="M15-1 8 19 14 16Z" fill="#3a95cc" /></V>,
  <V><path d="M1 17A10.700 10.700 0 0 1 22.500 17H17A5.500 5.500 0 0 0 6.500 17Z" fill="#fff" stroke={INK} strokeWidth="1.500" /><path d="M7 7.500A10.700 10.700 0 0 1 22.500 17H17A5.500 5.500 0 0 0 9.500 12Z" fill={LBLUE} stroke={BLUE} strokeWidth="1.500" /><path d="M11 16.500 17 10" stroke="#333" strokeWidth="2" /></V>,
  <V><Box x={1} y={3} w={21.500} h={17} f="#fff" s={INK} /><text x="3" y="14" fontSize="11" fill="#2489cc" fontFamily="Open Sans, sans-serif" textLength="18">123</text><path d="M3.500 17.300H20" stroke={GREY} /></V>,

  <V><Box x={1} y={1} w={21.500} h={21.500} f="#fff" s={INK} /><path d="M5 4.500V19" stroke={GREY} /><path d="M7 7H19M7 14.500H19" stroke={BLUE} strokeWidth="2" /><path d="M7 10H14M7 17.500H14" stroke={GREY} /></V>,
  <V><Box x={1} y={2.500} w={21.500} h={18} f="#fff" s={INK} /><path d="M3 13 7 6 11 13Z" fill="#3a9a50" /><path d="M12 6H20L16 13Z" fill="#e0393a" /><path d="M3.500 17H20" stroke={GREY} /></V>,
  <V><Box x={1} y={1} w={21.500} h={19.500} f="#fff" s={INK} /><path d="M1.500 3H22" stroke={LGREY} strokeWidth="2.500" /><path d="M1 5H22" stroke={GREY} /><Box x={5} y={8.500} w={3.500} h={3.500} f={LGREY} s={GREY} /><Box x={5} y={14.500} w={3.500} h={3.500} f={LGREY} s={GREY} /><Funnel /></V>,
  <V><Box x={1} y={1} w={21.500} h={21.500} f="#fff" s={INK} /><path d="M1.500 3H22" stroke={LGREY} strokeWidth="3" /><path d="M1 5.500H22.500M1 11H22.500M1 16.500H22.500M8 5V22M15 5V22" stroke={GREY} /><rect x="1" y="1" width="21.500" height="21.500" stroke={INK} strokeWidth="1.500" /></V>,
  <V><Box x={1} y={1} w={21.500} h={21.500} f="#fff" s={INK} /><path d="M1.500 3H22" stroke={LGREY} strokeWidth="3" /><path d="M15 5.500H22.500V22H1V16.500H15Z" fill={LBLUE} /><path d="M1 5.500H22.500M1 11H22.500M1 16.500H22.500M8 5V22M15 5V22" stroke={BLUE} /><rect x="1" y="1" width="21.500" height="21.500" stroke={INK} strokeWidth="1.500" /></V>,
  <V><text x="4" y="18.500" fontSize="20" fontWeight="700" fill="#2489cc" fontFamily="Open Sans, sans-serif" textLength="12" lengthAdjust="spacingAndGlyphs">R</text></V>,

  <V><text x="-1.500" y="18" fontSize="21" fontWeight="700" fill="#2489cc" fontFamily="Open Sans, sans-serif" textLength="25" lengthAdjust="spacingAndGlyphs">Py</text></V>,
  <V><path d="M1 5H16" stroke="#2489cc" strokeWidth="1.600" /><circle cx="18.500" cy="5" r="2.800" fill={LBLUE} stroke={BLUE} /><path d="M1 11H12M1 16H7" stroke={GREY} /><circle cx="13.500" cy="11" r="1.500" stroke={GREY} /><circle cx="8.500" cy="16" r="1.500" stroke={GREY} /><Axis /></V>,
  <V><path d="M8 11H12M16 3H12V19H16M12 11H16" stroke={INK} strokeWidth="1.600" /><g fill={LBLUE} stroke={BLUE}><rect x=".8" y="8.500" width="7.500" height="5" /><rect x="15" y="1" width="7.500" height="5" /><rect x="15" y="8.500" width="7.500" height="5" /><rect x="15" y="16.500" width="7.500" height="5" /></g></V>,
  <V><path d="M1 1.500H22.500V16.500H9.500L5 21V16.500H1Z" fill="#fff" stroke={BLUE} strokeWidth="1.600" /></V>,
  <V><path d="M4 5V1H15L20 6V22.500H4V12M15 1V6H20" fill="#fff" stroke={INK} strokeWidth="1.400" /><circle cx="4" cy="9" r="2.500" fill={LBLUE} stroke={BLUE} /><path d="M9 11H16M6 15H13" stroke="#2489cc" /></V>,
  <V><path d="M6 3H1C1 9 3 12 7 12M17 3H22.500C22.500 9 20 12 16 12" stroke={INK} strokeWidth="1.600" /><path d="M6 1H17V10C17 14 14 15 11.500 15S6 14 6 10ZM10 15V19M13 15V19" fill="#fff" stroke={INK} strokeWidth="1.500" /><path d="M6 1H17V4H6ZM6 19.500H17V22.500H6Z" fill={LBLUE} stroke={BLUE} /></V>,

  <V><path d="M2 0H14L20 6V23.500H2ZM14 0V6H20" fill="#fff" stroke={INK} strokeWidth="1.600" /><path d="M5 13h3v8H5zM10 17h3v4h-3zM14.500 11h3v10h-3z" fill="#333" /></V>,
  <V><Box x={1} y={2} w={21.500} h={17.500} f="#fff" s={INK} /><text x="4" y="15" fontSize="11" fill="#2489cc" fontFamily="Open Sans, sans-serif" textLength="17">123</text><path d="M3.500 17.500H20" stroke={GREY} /><BoltS /></V>,
  <V><Box x={13} y={1} w={8.500} h={8.500} f="#fff" s={GREY} /><Box x={2} y={13} w={8.500} h={8.500} f="#fff" s={GREY} /><Box x={6} y={5} w={4} h={5} f={BLUE} s={BLUE} /><BoltS /><Funnel /></V>,
  <V><path d="M2 1H22V14L17 22H2Z" fill={LBLUE} stroke={BLUE} strokeWidth="1.700" /><path d="M22 5.500 14.500 7.500V12L11 15.500 6.500 18 6 21.500" stroke="#fff" strokeWidth="2.600" /><path d="M-1-1H7V6L3 12-1 6Z" fill="#d96a00" /><circle cx="3" cy="3" r="1.500" fill="#fff" /><circle cx="19.500" cy="20" r="3.300" fill="#d96a00" stroke="#f3f2f1" /><circle cx="22" cy="14" r="2.200" fill="#d96a00" /></V>,
  <V><g stroke="#8a2d9a" strokeWidth="1.400" fill="#fff" strokeLinejoin="round"><path d="M8.500 1.500H14L22.500 11.500 14 21.500H8.500L.800 11.500Z" stroke="none" /><path d="M11.200 4.500 8.500 1.500.800 11.500 8.500 21.500 11.200 18.500M11.200 4.500 14 1.500 22.500 11.500 14 21.500 11.200 18.500M11.200 4.500 17 11.500 11.200 18.500 5.500 11.500ZM8.300 8 14 15M14 8 8.300 15" /></g></V>,
  <V><g stroke="#2b88d8" strokeWidth="1.600" fill="#fff" strokeLinejoin="round"><path d="M1 2H14.500L22.500 11.500 14.500 21H1L8.500 11.500Z" /><path d="M4.500 16.500 16 4M11 21 20 9.500" /></g></V>,
];

const RightPanes = () => (
  <>
    <div className="flex h-[746px] w-[41px] shrink-0 flex-col items-center border-l border-[#a0a0a0] bg-[#3a3a3a] pt-[16px] text-white">
      <Dbl c="#fff" />
      <svg width="16" height="16" viewBox="0 0 16 16" className="ml-[4px] mt-[19px]" fill="none" stroke="#fff" strokeWidth="1.700"><path d="M15 1V15L8.500 9.500H1V6H8.500Z" /></svg>
      <span className="-ml-[2px] mt-[11px] text-[17px] font-bold leading-[20px] tracking-[-0.15px] [writing-mode:vertical-rl]">Filters</span>
    </div>
    <div className="flex w-[226px] shrink-0 flex-col border-x border-[#dcdad8] bg-[#f3f2f1] text-[#252423]">
      <div className="flex h-[48px] items-center justify-between pl-[10px] pr-[9px] pt-[1px]">
        <span className="text-[18.5px] font-semibold leading-[24px] tracking-[0px]">Visualizations</span>
        <Dbl c="#252423" flip />
      </div>
      <div className="pl-[10px] text-[14px] font-semibold leading-[19px] tracking-[-0.05px]">Build visual</div>
      <div className="mt-[5px] flex items-center pl-[10px]">
        <div className="flex h-[40px] w-[40px] items-center justify-center rounded-[3px] bg-[#d2d0ce]">
          <svg width="30" height="31" viewBox="0 0 30 31"><path d="M0 1H24" stroke="#252423" strokeWidth="1.600" /><g fill="#117865" stroke="#252423" strokeWidth="1.300" strokeDasharray="2 1.500"><rect x=".8" y="7.500" width="28.400" height="8.500" /><rect x=".8" y="21" width="28.400" height="8.500" /></g></svg>
        </div>
        <svg width="31" height="31" viewBox="0 0 31 31" className="ml-[47px]" fill="none" stroke="#333" strokeWidth="1.600"><path d="M6 30H1V1H14L22 9V13M14 1V9.500H22" /><path d="M29.500 11.500 18 22.500 20.500 25.500C24 22 28 17 29.500 11.500ZM18 22.500C14 23 15 28 9 28.500C15 31.500 20.500 29.500 20.500 25.500" fill="#fff" /></svg>
      </div>
      <svg width="224" height="12" viewBox="0 0 224 12" fill="none" stroke="#8a8886" strokeWidth="1.200" className="mt-[5px]"><path d="M0 10.500H20L30 .8 40 10.500H224" /></svg>
      <div className="ml-[13px] mt-[13px] grid grid-cols-[repeat(6,24px)] gap-[11px]">
        {VIS.map((v, i) => <React.Fragment key={i}>{v}</React.Fragment>)}
      </div>
      <svg width="20" height="3" viewBox="0 0 20 3" className="ml-[15px] mt-[19px]" fill="#333"><rect x="0" width="2.200" height="2.200" /><rect x="8" width="2.200" height="2.200" /><rect x="16" width="2.200" height="2.200" /></svg>
      <div className="mt-[23px] h-px bg-[#d8d6d4]" />
      <div className="flex flex-col text-[14px] leading-[20px] tracking-[0px]">
        <div className="mt-[11px] pl-[14px]">Values</div>
        <div className="ml-[5px] mt-[6px] flex h-[35px] w-[212px] items-center rounded-[2px] border border-dashed border-[#c0bebc] bg-white pl-[12px] tracking-[0.1px]">Add data fields here</div>
        <div className="mt-[14px] pl-[14px] font-semibold tracking-[-0.2px] text-[#484644]">Drill through</div>
        <div className="mt-[11px] flex h-[20px] items-center justify-between pl-[14px] pr-[27px]">
          Cross-report
          <div className="flex h-[20px] w-[40px] items-center rounded-full border border-[#7a7876] bg-white pl-[5px] text-[10.500px] text-[#605e5c]"><i className="mr-[3px] block size-[10px] rounded-full bg-[#605e5c]" />Off</div>
        </div>
        <div className="mt-[14px] flex h-[20px] items-center justify-between pl-[14px] pr-[27px]">
          Keep all filters
          <div className="flex h-[20px] w-[40px] items-center rounded-full bg-[#117865] pl-[6px] text-[10.500px] text-white">On<i className="ml-[3px] block size-[10px] rounded-full bg-white" /></div>
        </div>
        <div className="ml-[5px] mt-[14px] flex h-[32px] w-[212px] items-center rounded-[2px] border border-dashed border-[#c0bebc] bg-white pl-[9px] tracking-[0.2px]">Add drill-through fields here</div>
      </div>
    </div>
    <div className="flex flex-1 flex-col items-center bg-[#f3f2f1] pt-[17px] text-[#252423]">
      <Dbl c="#252423" />
      <span className="-ml-[1px] mt-[18px] text-[18.5px] font-semibold leading-[20px] tracking-[-0.1px] [writing-mode:vertical-rl]">Data</span>
    </div>
  </>
);

const StatusBar = () => (
  <div className="flex h-[29px] shrink-0 items-center border-t border-[#dcdad8] bg-[#f3f2f1] text-[14px] tracking-[0.2px] text-[#484644]">
    <span className="ml-[5px] mt-[2px]">Page 2 of 2</span>
    <div className="ml-auto h-[2px] w-[6px] bg-[#555]" />
    <svg width="126" height="16" viewBox="0 0 126 16" className="ml-[6px]"><path d="M0 8.500H125M62.500 5V12" stroke="#605e5c" strokeWidth="1.200" /><rect x="48" y="2" width="5" height="13" fill="#605e5c" /></svg>
    <svg width="10" height="10" viewBox="0 0 10 10" className="ml-[6px]"><path d="M5 0V10M0 5H10" stroke="#555" strokeWidth="1.600" /></svg>
    <span className="ml-[16px] w-[30px] text-[14px] tracking-[-0.1px] text-[#605e5c]">83%</span>
    <svg width="20" height="16" viewBox="0 0 20 16" className="ml-[22px] mr-[23px]" fill="none" stroke="#605e5c"><rect x="1" y="1" width="18" height="14" strokeWidth="1.700" /><path d="M4 6V4H7M13 4H16V6M16 10V12H13M7 12H4V10" strokeWidth="1.200" /></svg>
  </div>
);

/* ---------- taskbar ---------- */

const TI = ({ children, bg = "" }: Kids & { bg?: string }) => (
  <div className="flex w-[55px] shrink-0 items-center justify-center">
    <div className={`relative flex h-[50px] w-[50px] items-center justify-center rounded-[5px] ${bg}`}>{children}</div>
  </div>
);
const S = ({ children }: Kids) => <svg width="30" height="30" viewBox="0 0 30 30" className="overflow-visible">{children}</svg>;

const Taskbar = () => (
  <div className="flex h-[61px] shrink-0 items-center border-t-2 border-black bg-[#202020] text-white">
    <div className="relative ml-[26px] h-[35px] w-[36px]">
      <svg width="34" height="35" viewBox="0 0 34 35" className="-mt-[1px]"><defs><linearGradient id="sun" x1="0" y1="0" x2="0" y2="1"><stop offset="0" stopColor="#fdd11a" /><stop offset="1" stopColor="#ee7a0c" /></linearGradient></defs><circle cx="15" cy="21.500" r="12.500" fill="url(#sun)" /><path d="M6 15H12M5 20H28M1 25H24M1 30H24" stroke="#f4dfae" strokeWidth="2.800" strokeLinecap="round" /></svg>
      <div className="absolute -top-[4px] right-[2px] flex size-[20px] items-center justify-center rounded-full bg-[#c42b1c] text-[12px]">3</div>
    </div>
    <svg width="29" height="29" viewBox="0 0 29 29" className="ml-[221px]"><defs><linearGradient id="win" x1="0" y1="0" x2="1" y2="1"><stop offset="0" stopColor="#7fe8fc" /><stop offset="1" stopColor="#0a94f8" /></linearGradient></defs><path d="M1 0H14V14H0V1ZM15 0H28L29 1V14H15ZM0 15H14V29H1L0 28ZM15 15H29V28L28 29H15Z" fill="url(#win)" /></svg>
    <div className="ml-[18px] flex h-[38px] w-[273px] items-center rounded-full bg-[#f2f2f2] text-[#5c5c5c]">
      <svg width="19" height="19" viewBox="0 0 19 19" className="ml-[14px]" fill="none" stroke="#222" strokeWidth="2"><circle cx="8" cy="8" r="6.800" /><path d="M12.800 13 18 18.300" /></svg>
      <span className="ml-[12px] text-[16.500px] tracking-[-0.2px]">Search</span>
      <svg width="54" height="30" viewBox="0 0 54 30" className="ml-auto mr-[11px]">
        <path d="M6 16 26 20 45 25M20 12 36 24M31 12 38 22M44 11 37 20 28 27" stroke="#2f9a5c" strokeWidth="1.500" fill="none" />
        <path d="M17 16 10 24 18 21ZM36 22 24 29 34 28Z" fill="#62b04a" />
        <path d="M41 22 52 26 50 29 40 26Z" fill="#e8d49a" />
        <path d="M6 19C-1 15 0 8 4 8C6 8 6 10 6 10S8 7 10 9C13 12 10 16 6 19Z" fill="#e8423d" />
        <path d="M46 14C38 10 39 2 43 2C46 2 46 4 46 4S49 0 52 3C54 8 50 12 46 14Z" fill="#ee5348" />
        <circle cx="19.500" cy="8.500" r="6.500" fill="#f2649a" /><path d="M15 8C18 4 23 6 23 9S17 13 17 9 21 8 21 9" stroke="#d9407c" fill="none" />
        <path d="M28 1 32 4 35 1 36 9C36 14 30 14 29 10Z" fill="#f27aa8" /><path d="M32 4V12" stroke="#d8437c" />
      </svg>
    </div>
    <div className="ml-[3.500px] flex">
      <TI><S><rect x="0" y="9" width="22" height="18" fill="#777" /><rect x="7" y="2" width="23" height="19" fill="#f4f4f4" /><rect x="7" y="9" width="15" height="12" fill="#bdbdbd" /></S></TI>
      <TI><FaWhatsapp size={34} color="#2bd366" /></TI>
      <TI><CopilotMark size={29} id="tb" /></TI>
      <TI><S><circle cx="16" cy="6" r="4.500" fill="#7b83eb" /><circle cx="25" cy="8" r="3.200" fill="#5059c9" /><path d="M9 12H22V21A7 7 0 0 1 9 22Z" fill="#7b83eb" /><path d="M22 12H29.500V19A5.500 5.500 0 0 1 22 23Z" fill="#5059c9" /><rect x="0" y="8" width="15" height="15" rx="1.500" fill="#4650b8" /><path d="M4 12H11M7.500 12V20" stroke="#fff" strokeWidth="1.800" /></S></TI>
      <TI><S><path d="M0 9 3 6.500 22 23.500V30L0 21Z" fill="#7b4fc0" /><path d="M0 21 3 23.500 22 6.500V0L0 9Z" fill="#a878e4" /><path d="M21 0 30 4V26L21 30Z" fill="#c595fb" /><path d="M3 11V19L7.500 15Z" fill="#202020" /></S></TI>
      <TI><S><circle cx="15" cy="15" r="14.700" fill="#1466b4" /><path d="M.5 14C2 5 8 .3 15 .3C24 .3 30 7 29.700 14C29 19 23 21 19 19C17 18 19 17 18.500 14C17 8 6 8 .500 14Z" fill="#38c6d8" /><path d="M20 1.500C27 4 30 10 29.700 14C29 19 23 21 19 19C17 18 19 17 18.500 14Z" fill="#55d87e" /><path d="M12 17C12 24 20 27 28 22C25 27 20 30 15 29.700Z" fill="#0d3f77" /><circle cx="7" cy="22.500" r="7.300" fill="#f5f5f5" /><circle cx="7" cy="19.500" r="2.300" fill="#666" /><path d="M3 23H11C11 26 9 27 7 27S3 26 3 23Z" fill="#666" /></S></TI>
      <TI><S><circle cx="14.500" cy="15" r="13.500" fill="#0c96d8" stroke="#fff" strokeWidth="2.200" /><path d="M10 10C11 4.500 20 5 19 11C18.500 14 14.500 14 14.500 18.500" stroke="#fff" strokeWidth="3" fill="none" /><circle cx="14.500" cy="23" r="1.900" fill="#fff" /><circle cx="25.500" cy="4" r="10" fill="#ffc107" /></S></TI>
      <TI><S><path d="M2 0 15 7 28 0V24L15 30 2 24ZM8 9V20.500L15 24 22 20.500V9L15 13Z" fill="#c02a2c" fillRule="evenodd" /></S></TI>
      <TI><S><path d="M0 10 15 0 30 10V20H0Z" fill="#9a9a9a" /><path d="M0 11V30H30V11L15 22Z" fill="#f2f0f0" stroke="#e0666a" /><path d="M0 30 11 19M30 30 19 19" stroke="#ccc" /><path d="M2 11 15 1 28 11 15 21Z" fill="#b8b8b8" /></S></TI>
      <TI><div className="flex size-[30px] items-center justify-center bg-[#74aa9c]"><RiOpenaiFill size={25} color="#fff" /></div></TI>
      <TI><S><rect x="0" y="0" width="22" height="22" rx="2" fill="#eef1f5" /><path d="M4.500 16V4.500H16" stroke="#d83b01" strokeWidth="3" strokeDasharray="3 1.500" fill="none" /><path d="M18 7V20L15 24M8 17.500H24" stroke="#9aa4ae" strokeWidth="2" fill="none" /><circle cx="27" cy="16" r="2.600" fill="none" stroke="#2b9be8" strokeWidth="2" /><circle cx="16" cy="27" r="2.600" fill="none" stroke="#2b9be8" strokeWidth="2" /></S></TI>
      <TI><S><path d="M0 3H9L12 6H30V12H0Z" fill="#d99b0a" /><rect x="0" y="7" width="30" height="21" rx="1" fill="#fdd04a" /><path d="M5 28V23Q5 20.500 8 20.500H22Q25 20.500 25 23V28Z" fill="#1383d8" /><path d="M9 24H21" stroke="#0b5ea8" strokeWidth="1.500" /></S></TI>
      <TI><S><rect x="0" y="4" width="30" height="22" rx="1" fill="#6fcaf8" /><rect x="1.500" y="5.500" width="27" height="17" fill="#a8e2fc" /><circle cx="10" cy="13" r="6" fill="#1474cc" /><path d="M10 13V7A6 6 0 0 1 16 13Z" fill="#f7941d" /><path d="M18 18 22 10H26M20 15H26M4 22H25" stroke="#1474cc" strokeWidth="1.500" fill="none" /><circle cx="25.500" cy="10" r="1.500" fill="#1474cc" /></S></TI>
      <TI><div className="flex size-[30px] items-center justify-center bg-[#1f8cc4]"><FaWordpress size={21} color="#fff" /></div></TI>
      <TI><S><path d="M3 4V16C3 19 17 19 17 16V4Z" fill="#fcd116" /><ellipse cx="10" cy="4" rx="7" ry="3" fill="#f2a55c" /><path d="M20 2H27V8M1 22V28H7" stroke="#3c9a4a" strokeWidth="2.500" fill="none" /><path d="M14 16 24.500 27M24.500 16 14 27" stroke="#1a6ab4" strokeWidth="2.400" /><path d="M12 17 17 13M22 14 27 18" stroke="#1a6ab4" strokeWidth="3" /></S></TI>
      <TI bg="bg-[#2f2f2f] border border-[#3a3a3a]"><S><rect x="16" y="0" width="10" height="30" fill="#d9920f" /><rect x="9" y="7" width="11" height="23" fill="#edb82a" /><rect x="3" y="15" width="10" height="15" fill="#f8dc5c" /></S><div className="absolute bottom-0 h-[4px] w-[20px] rounded-full bg-[#a0a0a0]" /></TI>
      <TI bg="bg-[#7d424a]"><S><rect width="30" height="30" rx="4" fill="#14161c" /><path d="M4.500 9C5 20 8 23.500 11 19.500C13 16.500 13 9 16 9" stroke="#1fb6e8" strokeWidth="4" fill="none" strokeLinecap="round" /><path d="M12.500 9C14 9 14 20 19 21C23 21 25 14 25 10" stroke="#2a62f4" strokeWidth="4" fill="none" strokeLinecap="round" /><path d="M20.500 8C23 6.500 25.500 8 25.200 11" stroke="#4ae08a" strokeWidth="4" fill="none" strokeLinecap="round" /></S><div className="absolute bottom-0 h-[4px] w-[8px] rounded-full bg-[#ff99a4]" /></TI>
    </div>
    <svg width="14" height="9" viewBox="0 0 14 9" className="ml-[84.500px]" fill="none" stroke="#fff" strokeWidth="1.800"><path d="M1 8 7 1.500 13 8" /></svg>
    <div className="ml-[20px] w-[41px] text-center text-[14px] leading-[20px] tracking-[-0.1px]">ENG<br />IN</div>
    <svg width="20" height="16" viewBox="0 0 20 16" className="ml-[17px]" fill="none" stroke="#fff" strokeWidth="1.500"><path d="M1 6Q10-3 19 6M4 9Q10 2.500 16 9M6.500 12Q10 8 13.500 12" /><circle cx="10" cy="14" r="1.300" fill="#fff" /></svg>
    <svg width="20" height="17" viewBox="0 0 20 17" className="ml-[10px]" fill="none" stroke="#fff" strokeWidth="1.400"><path d="M1 6V11H4.500L9 15.500V1.500L4.500 6ZM12 6Q13.500 8.500 12 11M14.500 3.500Q17.500 8.500 14.500 13.500M17 1Q21.500 8.500 17 16" /></svg>
    <svg width="20" height="14" viewBox="0 0 20 14" className="ml-[10px]" fill="none" stroke="#fff" strokeWidth="1.600"><rect x="1" y="1" width="15.500" height="12" rx="3" /><rect x="3" y="3" width="5.500" height="8" fill="#fff" stroke="none" /><path d="M18.500 4.500V9.500" strokeWidth="2" /></svg>
    <div className="-mt-[2px] ml-auto mr-[24px] text-right text-[14.5px] leading-[20px] tracking-[0.25px]">08:51<br />10-02-2025</div>
  </div>
);

export default function App() {
  return (
    <div className="flex h-[1080px] w-[1920px] flex-col overflow-hidden bg-[#f3f2f1] font-['Open_Sans','Noto_Sans',sans-serif]">
      <TitleBar />
      <Ribbon />
      <div className="flex h-[790px] shrink-0">
        <Rail />
        <div className="flex w-[1559px] shrink-0 flex-col">
          <div className="flex h-[746px]"><Canvas /></div>
          <PageTabs />
        </div>
        <RightPanes />
      </div>
      <StatusBar />
      <Taskbar />
    </div>
  );
}
